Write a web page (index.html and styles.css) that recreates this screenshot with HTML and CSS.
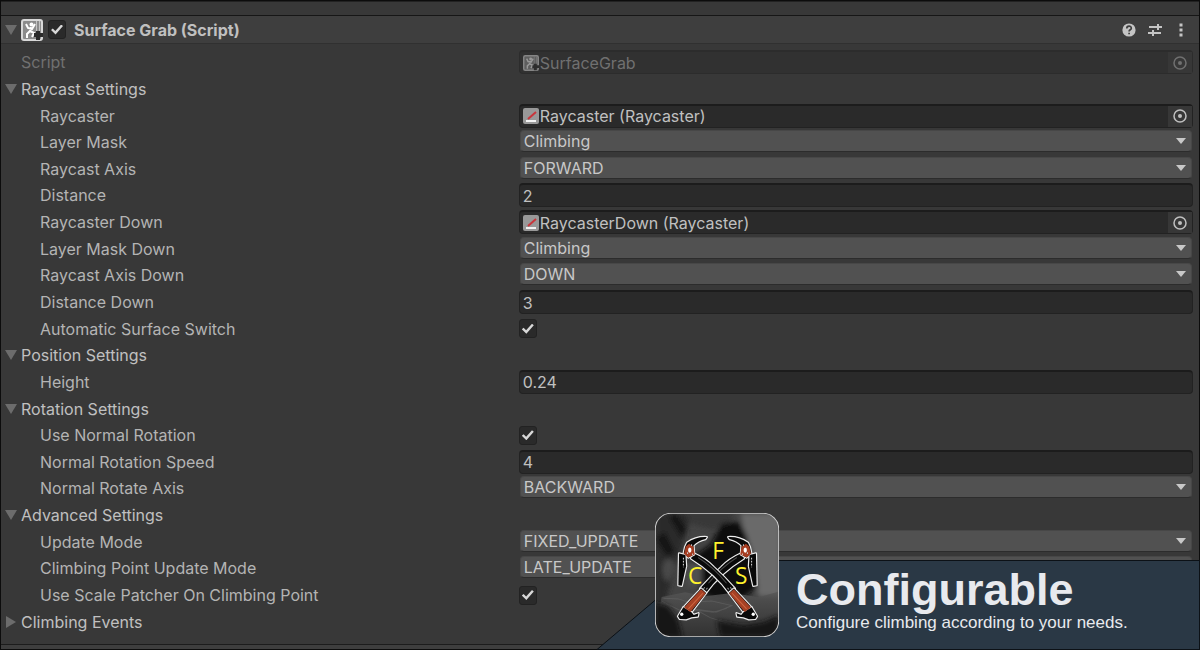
FILE: index.html
```
<!DOCTYPE html>
<html lang="en">
<head>
    <meta charset="UTF-8">
    <meta name="viewport" content="width=device-width, initial-scale=1.0">
    <title>Surface Grab</title>
    <link rel="stylesheet" href="styles.css">
</head>
<body>
    <svg class="defs" width="0" height="0">
        <symbol id="fold" viewBox="0 0 12 10"><path d="M0 0h12L6 10z" fill="#6c6c6c"/></symbol>
        <symbol id="target" viewBox="0 0 16 16">
            <circle cx="8" cy="8" r="6" fill="none" stroke="currentColor" stroke-width="1.5"/>
            <circle cx="8" cy="8" r="2" fill="currentColor"/>
        </symbol>
        <symbol id="script-icon" viewBox="0 0 22 22">
            <rect x="1" y="1" width="20" height="20" rx="2" fill="#8b8b8b" stroke="#d8d8d8" stroke-width="2"/>
            <path d="M15.500 2v14M18.500 2v14" stroke="#c4c4c4" stroke-width="1"/>
            <circle cx="10.500" cy="5.500" r="2" fill="#fff"/>
            <path d="M5 5l2 4 4 1 3-5M10 8l-1 5M9 12l4 2-2 4M9 12l-3 3v4" fill="none" stroke="#fff" stroke-width="2"/>
            <path d="M17 12v9M13 16h9" stroke="#2b2b2b" stroke-width="4"/>
        </symbol>
        <symbol id="ray-icon" viewBox="0 0 16 16">
            <rect width="16" height="16" rx="2" fill="#999"/>
            <path d="M3 13h10" stroke="#f2f2f2" stroke-width="2"/>
            <path d="M5 11l8-7" stroke="#c9353b" stroke-width="2"/>
        </symbol>
    </svg>

    <main class="inspector">
        <div class="strip"></div>
        <header class="head">
            <button class="fold" type="button" aria-label="Collapse"><svg><use href="#fold"/></svg></button>
            <svg class="script-icon"><use href="#script-icon"/></svg>
            <input class="check" type="checkbox" id="enabled" checked>
            <label class="title" for="enabled">Surface Grab (Script)</label>
            <button class="tool" type="button" aria-label="Help">
                <svg viewBox="0 0 16 16"><circle cx="8" cy="8" r="6.600" fill="#c4c4c4"/><path d="M5.800 6.500c0-3 4.500-3 4.500-.3 0 1.700-2.200 1.500-2.200 3.300M8.100 10.700v1.600" fill="none" stroke="#3e3e3e" stroke-width="1.700"/></svg>
            </button>
            <button class="tool" type="button" aria-label="Presets">
                <svg viewBox="0 0 16 16"><path d="M2 5h8M12 5h3M11 2v6M1 11h4M7 11h7M6 8v6" fill="none" stroke="#c4c4c4" stroke-width="2"/></svg>
            </button>
            <button class="tool" type="button" aria-label="More">
                <svg viewBox="0 0 16 16" fill="#c4c4c4"><path d="M6.500 1.500h3v3h-3zM6.500 6.500h3v3h-3zM6.500 11.500h3v3h-3z"/></svg>
            </button>
        </header>

        <form class="rows">
            <div class="row disabled">
                <label for="script">Script</label>
                <div class="object"><svg><use href="#script-icon"/></svg><input id="script" value="SurfaceGrab" disabled><button type="button" aria-label="Pick script" disabled><svg><use href="#target"/></svg></button></div>
            </div>
            <div class="row"><button class="group" type="button"><svg><use href="#fold"/></svg>Raycast Settings</button></div>
            <div class="row sub">
                <label for="raycaster">Raycaster</label>
                <div class="object"><svg><use href="#ray-icon"/></svg><input id="raycaster" value="Raycaster (Raycaster)" readonly><button type="button" aria-label="Pick raycaster"><svg><use href="#target"/></svg></button></div>
            </div>
            <div class="row sub">
                <label for="layer">Layer Mask</label>
                <div class="drop"><select id="layer"><option>Climbing</option></select></div>
            </div>
            <div class="row sub">
                <label for="axis">Raycast Axis</label>
                <div class="drop"><select id="axis"><option>FORWARD</option></select></div>
            </div>
            <div class="row sub">
                <label for="distance">Distance</label>
                <input class="field" id="distance" type="text" value="2">
            </div>
            <div class="row sub">
                <label for="raycaster-down">Raycaster Down</label>
                <div class="object"><svg><use href="#ray-icon"/></svg><input id="raycaster-down" value="RaycasterDown (Raycaster)" readonly><button type="button" aria-label="Pick raycaster down"><svg><use href="#target"/></svg></button></div>
            </div>
            <div class="row sub">
                <label for="layer-down">Layer Mask Down</label>
                <div class="drop"><select id="layer-down"><option>Climbing</option></select></div>
            </div>
            <div class="row sub">
                <label for="axis-down">Raycast Axis Down</label>
                <div class="drop"><select id="axis-down"><option>DOWN</option></select></div>
            </div>
            <div class="row sub">
                <label for="distance-down">Distance Down</label>
                <input class="field" id="distance-down" type="text" value="3">
            </div>
            <div class="row sub">
                <label for="auto-switch">Automatic Surface Switch</label>
                <input class="check" id="auto-switch" type="checkbox" checked>
            </div>
            <div class="row"><button class="group" type="button"><svg><use href="#fold"/></svg>Position Settings</button></div>
            <div class="row sub">
                <label for="height">Height</label>
                <input class="field" id="height" type="text" value="0.24">
            </div>
            <div class="row"><button class="group" type="button"><svg><use href="#fold"/></svg>Rotation Settings</button></div>
            <div class="row sub">
                <label for="normal">Use Normal Rotation</label>
                <input class="check" id="normal" type="checkbox" checked>
            </div>
            <div class="row sub">
                <label for="speed">Normal Rotation Speed</label>
                <input class="field" id="speed" type="text" value="4">
            </div>
            <div class="row sub">
                <label for="rotate-axis">Normal Rotate Axis</label>
                <div class="drop"><select id="rotate-axis"><option>BACKWARD</option></select></div>
            </div>
            <div class="row"><button class="group" type="button"><svg><use href="#fold"/></svg>Advanced Settings</button></div>
            <div class="row sub">
                <label for="update">Update Mode</label>
                <div class="drop"><select id="update"><option>FIXED_UPDATE</option></select></div>
            </div>
            <div class="row sub">
                <label for="point-update">Climbing Point Update Mode</label>
                <div class="drop"><select id="point-update"><option>LATE_UPDATE</option></select></div>
            </div>
            <div class="row sub">
                <label for="patcher">Use Scale Patcher On Climbing Point</label>
                <input class="check" id="patcher" type="checkbox" checked>
            </div>
            <div class="row"><button class="group closed" type="button"><svg><use href="#fold"/></svg>Climbing Events</button></div>
        </form>
        <div class="bottom"></div>
    </main>

    <aside class="banner">
        <svg class="shape" viewBox="0 0 604 90" preserveAspectRatio="none"><path d="M1 89.500L106 .5H603.500V89.500z" fill="#2a3845" stroke="#0c1116"/></svg>
        <svg class="logo" viewBox="45 24 371 371">
            <defs>
                <clipPath id="round"><rect x="46" y="25" width="369" height="369" rx="46"/></clipPath>
                <filter id="soft" x="-30%" y="-30%" width="160%" height="160%"><feGaussianBlur stdDeviation="8"/></filter>
                <linearGradient id="ground" x1="0" y1="0" x2="0" y2="1"><stop offset="0" stop-color="#565656"/><stop offset="1" stop-color="#2c2c2c"/></linearGradient>
                <g id="axe">
                    <path d="M158 143Q199 162 220 185Q252 214 284 250L268 265Q225 204 153 160z"/>
                    <path d="M281 250L334 307L312 323L266 263z"/>
                    <path d="M141 113Q168 94 200 96L196 102Q174 107 160 121L162 148L145 157L130 148L135 126z"/>
                    <path d="M117 145L136 150L138 183L125 242L115 240z"/>
                    <path d="M310 321L334 306L350 333L345 341L326 342L310 336L291 334L289 324L303 329z"/>
                </g>
                <g id="axe-color">
                    <path d="M147 116L160 125L164 148L144 157L132 146L137 124z" fill="#a63d22"/>
                    <path d="M281 252L332 307L313 320L267 264z" fill="#a64124"/>
                    <path d="M276 264L319 311" stroke="#cf6843" stroke-width="3"/>
                    <path d="M174 157Q222 187 259 234" fill="none" stroke="#4a4a4a" stroke-width="3"/>
                    <ellipse cx="149" cy="135" rx="5" ry="8" fill="#fff"/>
                    <path d="M141 144h3M156 148h3M153 120h3" stroke="#ccc" stroke-width="5"/>
                    <path d="M130 158v28" stroke="#ddd" stroke-width="3" stroke-dasharray="5 4"/>
                    <circle cx="339" cy="327" r="5" fill="#fff"/>
                    <path d="M262 248l4 5M270 246l4 5" stroke="#999" stroke-width="3"/>
                </g>
            </defs>
            <g clip-path="url(#round)">
                <rect x="45" y="24" width="371" height="371" fill="#444"/>
                <g filter="url(#soft)">
                    <path d="M45 24h110l-35 120-45 150H45z" fill="#292929"/>
                    <path d="M300 24h120v250h-65z" fill="#6b6b6b"/>
                    <path d="M85 35l25-10 30 45-15 30zM45 100l30-20 30 60-25 15z" fill="#151515"/>
                    <path d="M140 24h140l-10 35-50 15-70-18z" fill="#393939"/>
                    <path d="M245 55l50-4 22 35 25 80 10 82-60 40-80-10-35-25-30-90 65-45z" fill="#0c0c0c"/>
                    <path d="M70 170q30-25 35 18l-18 42q-28-10-17-60z" fill="#4a4a4a"/>
                    <path d="M145 172h40v70h-45z" fill="#505050"/>
                </g>
                <path d="M65 275l70-14 60 12 80-10 80 13 65-18v140H40z" fill="url(#ground)" opacity=".8"/>
                <path d="M70 279l45 2 30 10 70-4 60 14-45 19-65-8 45 25 60 20M65 288l70 35 35-8 50 6 40-12" fill="none" stroke="#777" stroke-width="3" opacity=".35"/>
                <path d="M45 290l40 12 28 40 15 55H45zM230 345l80 15 60-10 45-20v65H240z" fill="#191919" filter="url(#soft)"/>
            </g>
            <g class="outline"><use href="#axe" transform="translate(464 0) scale(-1 1)"/></g>
            <use href="#axe-color" transform="translate(464 0) scale(-1 1)"/>
            <g class="outline"><use href="#axe"/></g>
            <use href="#axe-color"/>
            <g class="letters"><text x="234" y="162">F</text><text x="165" y="235">C</text><text x="303" y="235">S</text></g>
            <rect x="46" y="25" width="369" height="369" rx="46" fill="none" stroke="#cfcfcf" stroke-width="3"/>
        </svg>
        <div class="caption">
            <h1>Configurable</h1>
            <p>Configure climbing according to your needs.</p>
        </div>
    </aside>
</body>
</html>
```
FILE: styles.css
```
* {
    box-sizing: border-box;
}
body {
    margin: 0;
    background-color: #383838;
    color: #b4b4b4;
    font-family: Inter, "Liberation Sans", sans-serif;
    font-size: 16px;
    line-height: 20px;
}
button, input, select {
    font: inherit;
    color: inherit;
    margin: 0;
    padding: 0;
    border: none;
    background: none;
}
.defs {
    position: absolute;
}

/* inspector panel */
.inspector {
    display: flex;
    flex-direction: column;
    min-height: 100vh;
    border: 1px solid #0c0c0c;
}
.strip {
    height: 15px;
    border-top: 1px solid #222;
    border-bottom: 1px solid #161616;
}
.head {
    display: flex;
    align-items: center;
    height: 28px;
    padding: 0 10px 0 2px;
    background-color: #3e3e3e;
    border-bottom: 1px solid #303030;
}
.fold {
    width: 18px;
    height: 20px;
}
.fold svg, .group svg {
    display: block;
    width: 12px;
    height: 10px;
}
.fold svg {
    margin: 0 2px;
}
.script-icon {
    width: 22px;
    height: 22px;
    margin-right: 5px;
}
.title {
    flex: 1;
    margin-left: 8px;
    font-weight: 700;
    color: #c0c0c0;
}
.tool {
    width: 16px;
    height: 16px;
    margin-left: 10px;
}
.tool svg {
    display: block;
    width: 16px;
    height: 16px;
}
.rows {
    flex: 1;
    display: grid;
    grid-auto-rows: 1fr;
    padding: 5px 6px 9px 4px;
}
.row {
    display: grid;
    grid-template-columns: 43.25% 1fr;
    align-items: center;
}
.row label {
    padding-left: 16px;
}
.sub label {
    padding-left: 35px;
}
.group {
    display: flex;
    align-items: center;
    gap: 4px;
    color: #c0c0c0;
    white-space: nowrap;
}
.closed svg {
    transform: rotate(-90deg);
}

/* controls */
.field, .object {
    width: 100%;
    height: 24px;
    background-color: #2a2a2a;
    border: 1px solid #222;
    border-top: 2px solid #1c1c1c;
    border-radius: 4px;
    color: #c0c0c0;
}
.field {
    padding: 0 3px;
}
.object {
    display: flex;
    align-items: center;
    padding-left: 3px;
}
.object > svg {
    width: 16px;
    height: 16px;
    margin-right: 1px;
}
.object input {
    flex: 1;
    min-width: 0;
}
.object button {
    display: flex;
    align-items: center;
    justify-content: center;
    width: 24px;
    height: 21px;
    background-color: #373737;
}
.object button svg {
    width: 16px;
    height: 16px;
}
.disabled, .disabled .object {
    color: #707070;
}
.disabled .object {
    background-color: #313131;
    border-color: #2c2c2c;
}
.disabled .object > svg {
    opacity: 0.5;
}
.drop {
    position: relative;
    margin: 0 1px 2px;
}
.drop select {
    display: block;
    appearance: none;
    width: 100%;
    height: 22px;
    padding-left: 3px;
    background-color: #515151;
    border: 1px solid #474747;
    border-bottom-color: #2c2c2c;
    border-radius: 4px;
    color: #c8c8c8;
}
.drop::after {
    content: "";
    position: absolute;
    right: 6px;
    top: 8px;
    border: 5px solid transparent;
    border-top: 6px solid #c8c8c8;
    border-bottom: 0;
}
.check {
    appearance: none;
    display: flex;
    align-items: center;
    justify-content: center;
    width: 18px;
    height: 19px;
    background-color: #2a2a2a;
    border: 1px solid #222;
    border-radius: 3px;
}
.check:checked::before {
    content: "";
    width: 12px;
    height: 10px;
    background-color: #d8d8d8;
    clip-path: polygon(0 55%, 15% 40%, 36% 65%, 85% 0, 100% 15%, 38% 100%);
}
.bottom {
    height: 5px;
    background-color: #3e3e3e;
    border-top: 1px solid #1c1c1c;
}

/* banner over the panel */
.banner {
    position: absolute;
    right: 0;
    bottom: 0;
    width: 604px;
    height: 90px;
    color: #e8eaee;
    font-family: "Liberation Sans", Arial, sans-serif;
}
.shape {
    position: absolute;
    width: 100%;
    height: 100%;
}
.logo {
    position: absolute;
    left: 59px;
    bottom: 13px;
    width: 124px;
    height: 124px;
}
.outline {
    fill: #090909;
    stroke: #eee;
    stroke-width: 7px;
    stroke-linejoin: round;
    paint-order: stroke;
}
.letters {
    fill: #fff22d;
    font-family: "Open Sans", sans-serif;
    font-size: 68px;
    text-anchor: middle;
}
.caption {
    position: relative;
    padding: 6px 0 0 200px;
    white-space: nowrap;
}
.caption h1 {
    margin: 0;
    font-size: 45px;
    line-height: 48px;
}
.caption p {
    margin: 0;
    font-size: 17px;
    line-height: 18px;
}
```
